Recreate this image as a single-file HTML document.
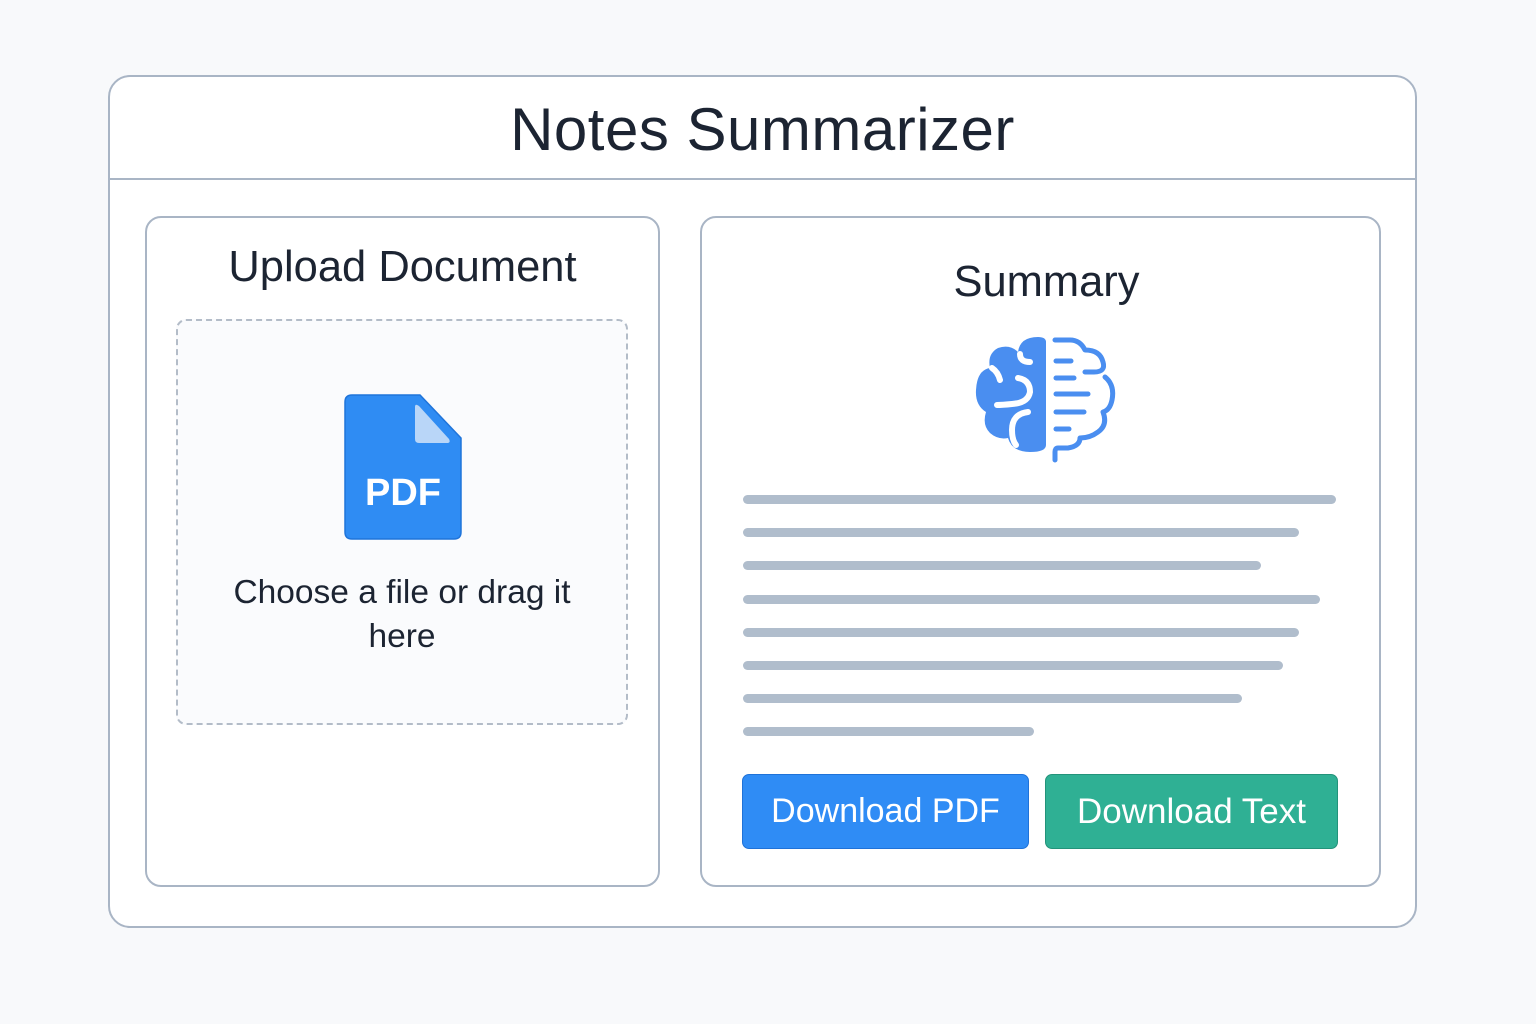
<!DOCTYPE html>
<html><head><style>
*{box-sizing:border-box;margin:0;padding:0}
body{width:1536px;height:1024px;background:#f8f9fb;font-family:"Liberation Sans",sans-serif;position:relative;overflow:hidden;color:#1c2432}
.abs{position:absolute}
.card{left:108px;top:75px;width:1309px;height:853px;border:2px solid #a9b5c5;border-radius:22px;background:#fff}
.hdr{left:108px;top:178px;width:1309px;height:2px;background:#a9b5c5}
.title{left:108px;width:1309px;top:95px;text-align:center;font-size:60px;font-weight:500;letter-spacing:0.5px}
.panel{border:2px solid #a9b5c5;border-radius:16px;background:#fff}
.dash{left:176px;top:319px;width:452px;height:406px;border:2px dashed #b3bcc8;border-radius:10px;background:#fafbfd}
.line{height:9px;border-radius:5px;background:#b0bdcc;left:743px}
.btn{top:774px;height:75px;border-radius:7px;color:#fff;font-size:34px;text-align:center;line-height:73px}
</style></head><body>
<div class="abs card"></div>
<div class="abs hdr"></div>
<div class="abs title">Notes Summarizer</div>
<div class="abs panel" style="left:145px;top:216px;width:515px;height:671px"></div>
<div class="abs panel" style="left:700px;top:216px;width:681px;height:671px"></div>
<div class="abs" style="left:145px;width:515px;top:243px;text-align:center;font-size:43.5px;font-weight:500">Upload Document</div>
<div class="abs dash"></div>
<svg class="abs" style="left:340px;top:390px" width="130" height="155" viewBox="340 390 130 155">
<path d="M352 395 H420 L461 438 V532 Q461 539 454 539 H352 Q345 539 345 532 V402 Q345 395 352 395Z" fill="#2f8cf3" stroke="#1f74da" stroke-width="1.5"/>
<path d="M415 407 Q415 403 419 406 L449 439 Q451 443 447 443 H419 Q415 443 415 439Z" fill="#b9d6f8"/>
<text x="403" y="505" text-anchor="middle" font-family="Liberation Sans" font-size="38" font-weight="bold" fill="#fff">PDF</text>
</svg>
<div class="abs" style="left:176px;width:452px;top:571px;text-align:center;font-size:33.5px;line-height:44px">Choose a file or drag it<br>here</div>
<div class="abs" style="left:700px;width:693px;top:258px;text-align:center;font-size:43.5px;font-weight:500">Summary</div>
<svg class="abs" style="left:960px;top:325px" width="170" height="145" viewBox="960 325 170 145">
<path d="M1046 342 Q1046 337 1038 337 Q1020 337 1018 352 Q1010 344 998 348 Q987 354 990 368 Q977 370 976 390 Q975 405 986 412 Q982 425 990 433 Q998 440 1008 438 Q1012 452 1030 452 Q1046 452 1046 445Z" fill="#4a8ef0"/>
<g fill="none" stroke="#fff" stroke-width="6" stroke-linecap="round">
<path d="M1020 354 Q1020 362 1030 362"/>
<path d="M1018 378 Q1030 380 1030 392 Q1028 403 1012 404 Q1002 405 997 405"/>
<path d="M1028 412 Q1012 414 1012 430 Q1012 440 1016 445"/>
<path d="M992 368 Q998 372 1000 380"/>
</g>
<g fill="none" stroke="#4a8ef0" stroke-width="5" stroke-linecap="round" stroke-linejoin="round">
<path d="M1055 340 H1070 Q1080 340 1085 350 Q1100 350 1103 362 Q1106 372 1094 372 H1085"/>
<path d="M1105 377 Q1115 385 1112 400 Q1110 410 1103 412 Q1108 425 1098 432 Q1090 438 1080 438 Q1080 446 1068 448 H1058 Q1055 448 1055 452 V460"/>
<path d="M1056 361 H1071"/><path d="M1056 378 H1074"/><path d="M1056 394 H1088"/><path d="M1056 412 H1084"/><path d="M1056 429 H1069"/>
</g>
</svg>
<div class="abs line" style="top:495px;width:593px"></div>
<div class="abs line" style="top:528px;width:556px"></div>
<div class="abs line" style="top:561px;width:518px"></div>
<div class="abs line" style="top:595px;width:577px"></div>
<div class="abs line" style="top:628px;width:556px"></div>
<div class="abs line" style="top:661px;width:540px"></div>
<div class="abs line" style="top:694px;width:499px"></div>
<div class="abs line" style="top:727px;width:291px"></div>
<div class="abs btn" style="left:742px;width:287px;background:#2f8cf5;border:1px solid #1f72d8">Download PDF</div>
<div class="abs btn" style="left:1045px;width:293px;background:#2fb094;border:1px solid #23937a;font-size:35px">Download Text</div>
</body></html>
